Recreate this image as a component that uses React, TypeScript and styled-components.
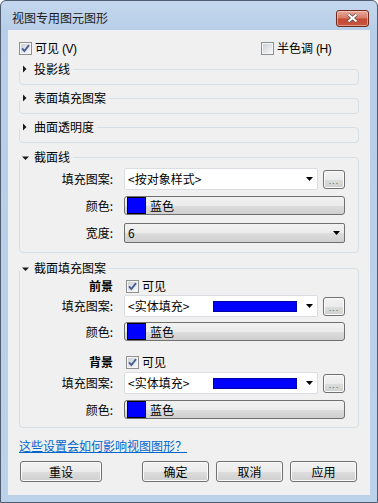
import styled, { createGlobalStyle } from "styled-components";

const GlobalStyle = createGlobalStyle`
  html, body {
    margin: 0;
    padding: 0;
    background: #ffffff;
  }
  body {
    font-family: "Noto Sans CJK SC", "Noto Sans", sans-serif;
    font-size: 12px;
    color: #000000;
  }
`;

const Window = styled.div`
  box-sizing: border-box;
  width: 378px;
  height: 503px;
  display: flex;
  flex-direction: column;
  border: 1px solid #4e5d70;
  border-radius: 6px 6px 0 0;
  background: linear-gradient(180deg, #c4d7ee 0px, #b8cee8 29px, #bcd2ea 100%);
  overflow: hidden;
`;

const TitleBar = styled.div`
  box-sizing: border-box;
  height: 29px;
  padding: 5px 8px 0 11px;
  display: flex;
  align-items: center;
  justify-content: space-between;
`;

const TitleText = styled.span`
  line-height: 14px;
  color: #1a1a1a;
`;

const CloseButton = styled.div`
  box-sizing: border-box;
  width: 33px;
  height: 17px;
  border: 1px solid #6e2b20;
  border-radius: 3px;
  background: linear-gradient(180deg, #e9ab9c 0%, #d97b69 45%, #c64b35 55%, #c8553f 100%);
  box-shadow: inset 0 0 0 1px rgba(255, 220, 210, 0.5);
  display: flex;
  align-items: center;
  justify-content: center;
`;

const Client = styled.div`
  flex: 1;
  margin: 0 7px 7px 7px;
  padding: 11px 11px 0 11px;
  background: #f0f0f0;
  display: flex;
  flex-direction: column;
`;

const TopRow = styled.div`
  display: grid;
  grid-template-columns: 242px 1fr;
  height: 14px;
  align-items: center;
`;

const CheckLabel = styled.label<{ $ml?: number }>`
  display: flex;
  align-items: center;
  gap: 3px;
  margin-left: ${(p) => p.$ml ?? 0}px;
  line-height: 14px;
`;

const Mnemonic = styled.span`
  font-family: "Liberation Sans", sans-serif;
  font-size: 12px;
  margin-left: 3px;
  letter-spacing: -0.5px;
`;

const Group = styled.div<{ $mt: number; $pb: number }>`
  margin-top: ${(p) => p.$mt}px;
  padding-bottom: ${(p) => p.$pb}px;
  border: 1px solid #d5dfe5;
  border-radius: 4px;
  display: flex;
  flex-direction: column;
`;

const GroupHeader = styled.div`
  display: flex;
  align-items: center;
  width: fit-content;
  height: 14px;
  margin-top: -8px;
  padding-right: 3px;
  background: #f0f0f0;
  line-height: 14px;
`;

const ArrowIcon = styled.svg`
  margin-right: 2px;
  flex: none;
`;

const Row = styled.div<{ $mt: number; $h: number }>`
  display: grid;
  grid-template-columns: 93px 1fr;
  column-gap: 11px;
  align-items: center;
  margin-top: ${(p) => p.$mt}px;
  height: ${(p) => p.$h}px;
  padding-right: 13px;
`;

const Label = styled.span<{ $bold?: boolean }>`
  text-align: right;
  line-height: 14px;
  font-weight: ${(p) => (p.$bold ? 700 : 400)};
`;

const ControlLine = styled.div`
  display: flex;
  align-items: center;
  gap: 5px;
  height: 100%;
`;

const Combo = styled.div<{ $plain?: boolean }>`
  box-sizing: border-box;
  flex: 1;
  height: 100%;
  display: flex;
  align-items: center;
  padding: 0 4px 0 3px;
  border-radius: 2px;
  border: 1px solid ${(p) => (p.$plain ? "#dadde2" : "#707070")};
  background: ${(p) =>
    p.$plain
      ? "#ffffff"
      : "linear-gradient(180deg, #f2f2f2 0%, #ebebeb 50%, #dddddd 51%, #cfcfcf 100%)"};
  line-height: 14px;
`;

const ComboText = styled.span<{ $w?: number }>`
  width: ${(p) => (p.$w ? `${p.$w}px` : "auto")};
  flex: none;
  white-space: nowrap;
`;

const PatternBar = styled.div`
  box-sizing: border-box;
  width: 84px;
  height: 11px;
  background: #0000ff;
  border: 1px solid #0000a8;
`;

const DropArrow = styled.svg`
  margin-left: auto;
  flex: none;
`;

const DotsButton = styled.div`
  box-sizing: border-box;
  width: 22px;
  height: 19px;
  flex: none;
  border: 1px solid #707070;
  border-radius: 3px;
  background: linear-gradient(180deg, #f2f2f2 0%, #ebebeb 50%, #dddddd 51%, #cfcfcf 100%);
  box-shadow: inset 0 0 0 1px #fbfbfb;
  display: flex;
  align-items: flex-end;
  justify-content: center;
  padding-bottom: 4px;
  font-family: "Liberation Sans", sans-serif;
  font-size: 9px;
  line-height: 6px;
  letter-spacing: 1px;
  color: #555555;
`;

const ColorButton = styled.div`
  box-sizing: border-box;
  height: 19px;
  display: flex;
  align-items: center;
  gap: 4px;
  padding-left: 2px;
  border: 1px solid #707070;
  border-radius: 3px;
  background: linear-gradient(180deg, #f2f2f2 0%, #ebebeb 50%, #dddddd 51%, #cfcfcf 100%);
  line-height: 14px;
`;

const Swatch = styled.div<{ $color: string }>`
  box-sizing: border-box;
  width: 19px;
  height: 17px;
  background: ${(p) => p.$color};
  border: 1px solid #000000;
`;

const HelpLink = styled.a`
  margin-top: 11px;
  line-height: 14px;
  color: #0066cc;
  text-decoration: underline;
  width: fit-content;
  cursor: pointer;
`;

const ButtonRow = styled.div`
  display: flex;
  align-items: center;
  gap: 7px;
  margin-top: 8px;
  padding: 0 2px 0 1px;
`;

const PushButton = styled.button<{ $w: number; $push?: boolean }>`
  box-sizing: border-box;
  width: ${(p) => p.$w}px;
  height: 21px;
  margin-right: ${(p) => (p.$push ? "auto" : "0")};
  padding: 0;
  border: 1px solid #707070;
  border-radius: 3px;
  background: linear-gradient(180deg, #f2f2f2 0%, #ebebeb 50%, #dddddd 51%, #cfcfcf 100%);
  box-shadow: inset 0 0 0 1px #fbfbfb;
  font-family: "Noto Sans CJK SC", "Noto Sans", sans-serif;
  font-size: 12px;
  line-height: 14px;
  color: #000000;
`;

const CheckBox = ({ checked }: { checked: boolean }) => (
  <svg width={13} height={13} viewBox="0 0 13 13">
    <defs>
      <linearGradient id="cbfill" x1="0" y1="0" x2="1" y2="1">
        <stop offset="0" stopColor="#cdd1d6" />
        <stop offset="1" stopColor="#f7f7f7" />
      </linearGradient>
    </defs>
    <rect x="0.5" y="0.5" width="12" height="12" fill="#f5f5f5" stroke="#8e8f8f" />
    <rect x="2" y="2" width="9" height="9" fill="url(#cbfill)" />
    {checked && (
      <path d="M3 6.3 L5.4 9 L10 3.2" fill="none" stroke="#4a5f97" strokeWidth="1.9" />
    )}
  </svg>
);

const Arrow = ({ open }: { open: boolean }) => (
  <ArrowIcon width={12} height={14} viewBox="0 0 12 14">
    {open ? (
      <polygon points="2,6.5 9,6.5 5.5,10" fill="#1a1a1a" />
    ) : (
      <polygon points="3,3.5 6.5,7 3,10.5" fill="#1a1a1a" />
    )}
  </ArrowIcon>
);

const Down = () => (
  <DropArrow width={7} height={4} viewBox="0 0 7 4">
    <polygon points="0,0 7,0 3.5,4" fill="#000000" />
  </DropArrow>
);

const groups = [
  { title: "投影线", mt: 14 },
  { title: "表面填充图案", mt: 13 },
  { title: "曲面透明度", mt: 13 },
];

const FillRow = ({ mt, solid }: { mt: number; solid: boolean }) => (
  <Row $mt={mt} $h={22}>
    <Label>填充图案:</Label>
    <ControlLine>
      <Combo $plain>
        {solid ? (
          <>
            <ComboText $w={85}>&lt;实体填充&gt;</ComboText>
            <PatternBar />
          </>
        ) : (
          <ComboText>&lt;按对象样式&gt;</ComboText>
        )}
        <Down />
      </Combo>
      <DotsButton>...</DotsButton>
    </ControlLine>
  </Row>
);

const ColorRow = ({ mt }: { mt: number }) => (
  <Row $mt={mt} $h={19}>
    <Label>颜色:</Label>
    <ColorButton>
      <Swatch $color="#0000ff" />
      <span>蓝色</span>
    </ColorButton>
  </Row>
);

const App = () => {
  return (
    <>
      <GlobalStyle />
      <Window>
        <TitleBar>
          <TitleText>视图专用图元图形</TitleText>
          <CloseButton>
            <svg width={13} height={10} viewBox="0 0 13 10">
              <path d="M2.5 1.5 L10.5 8.5 M10.5 1.5 L2.5 8.5" stroke="#5b4a48" strokeWidth="3.6" />
              <path d="M2.5 1.5 L10.5 8.5 M10.5 1.5 L2.5 8.5" stroke="#ffffff" strokeWidth="2" />
            </svg>
          </CloseButton>
        </TitleBar>
        <Client>
          <TopRow>
            <CheckLabel>
              <CheckBox checked />
              <span>
                可见<Mnemonic>(V)</Mnemonic>
              </span>
            </CheckLabel>
            <CheckLabel>
              <CheckBox checked={false} />
              <span>
                半色调<Mnemonic>(H)</Mnemonic>
              </span>
            </CheckLabel>
          </TopRow>

          {groups.map((g) => (
            <Group key={g.title} $mt={g.mt} $pb={8}>
              <GroupHeader>
                <Arrow open={false} />
                {g.title}
              </GroupHeader>
            </Group>
          ))}

          <Group $mt={14} $pb={9}>
            <GroupHeader>
              <Arrow open />
              截面线
            </GroupHeader>
            <FillRow mt={4} solid={false} />
            <ColorRow mt={6} />
            <Row $mt={8} $h={20}>
              <Label>宽度:</Label>
              <Combo>
                <ComboText>6</ComboText>
                <Down />
              </Combo>
            </Row>
          </Group>

          <Group $mt={15} $pb={8}>
            <GroupHeader>
              <Arrow open />
              截面填充图案
            </GroupHeader>
            <Row $mt={4} $h={14}>
              <Label $bold>前景</Label>
              <CheckLabel $ml={2}>
                <CheckBox checked />
                <span>可见</span>
              </CheckLabel>
            </Row>
            <FillRow mt={2} solid />
            <ColorRow mt={5} />
            <Row $mt={14} $h={14}>
              <Label $bold>背景</Label>
              <CheckLabel $ml={2}>
                <CheckBox checked />
                <span>可见</span>
              </CheckLabel>
            </Row>
            <FillRow mt={3} solid />
            <ColorRow mt={6} />
          </Group>

          <HelpLink>这些设置会如何影响视图图形？</HelpLink>

          <ButtonRow>
            <PushButton $w={82} $push>重设</PushButton>
            <PushButton $w={67}>确定</PushButton>
            <PushButton $w={67}>取消</PushButton>
            <PushButton $w={67}>应用</PushButton>
          </ButtonRow>
        </Client>
      </Window>
    </>
  );
};

export default App;
